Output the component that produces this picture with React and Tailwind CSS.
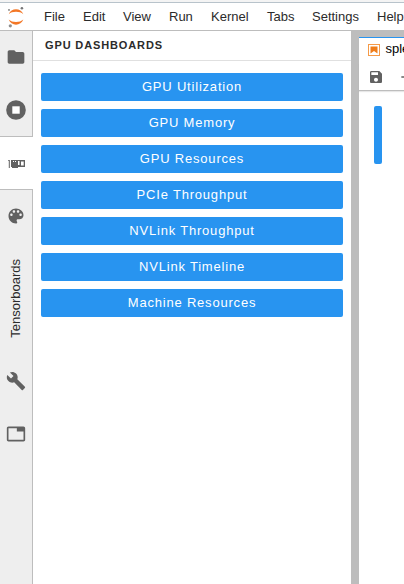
import React from "react";

const menus = [
  ["File", "w-[39px]"],
  ["Edit", "w-[40px]"],
  ["View", "w-[46px]"],
  ["Run", "w-[42px]"],
  ["Kernel", "w-[56px]"],
  ["Tabs", "w-[45px]"],
  ["Settings", "w-[65px]"],
  ["Help", "w-[45px]"],
];

const dashboards = [
  "GPU Utilization",
  "GPU Memory",
  "GPU Resources",
  "PCIe Throughput",
  "NVLink Throughput",
  "NVLink Timeline",
  "Machine Resources",
];

function JupyterLogo() {
  return (
    <svg className="ml-[7px] mt-[3px] h-[22px] w-[18px] shrink-0" viewBox="0 0 18 22">
      <path d="M1.700 8.200C3 5 5.800 3.200 9 3.200s6 1.800 7.300 5C14.500 6.500 12 5.800 9 5.800s-5.500.7-7.300 2.400Z" fill="#f37726" />
      <path d="M1.700 13.500C3 16.900 5.800 18.700 9 18.700s6-1.800 7.300-5.200C14.500 15.200 12 16 9 16s-5.500-.8-7.300-2.500Z" fill="#f37726" />
      <circle cx="14.900" cy="2.200" r="1.300" fill="#767677" />
      <circle cx="2" cy="3.900" r="0.900" fill="#767677" />
      <circle cx="3.300" cy="19.800" r="1.600" fill="#8e8e8e" />
    </svg>
  );
}

function Icon({ children, className = "h-5 w-5" }) {
  return (
    <svg className={className} viewBox="0 0 24 24" fill="#616161">
      {children}
    </svg>
  );
}

function GpuIcon() {
  return (
    <svg className="mt-0.5 h-[10px] w-[18px]" viewBox="0 0 18 10" fill="#616161">
      <path d="M1 1h1.800v8H1.800V1.800H1z" />
      <path fillRule="evenodd" d="M4 1h14v7h-7v1H5V8H4ZM6 2v1h1V2ZM8 2v1h1V2ZM11 2v4h1.500V2ZM14 2.500v4h2.700v-4Z" />
    </svg>
  );
}

function SideTab({ children, active, raised }) {
  return (
    <div
      className={
        active
          ? "flex h-[54px] w-[33px] -mt-px shrink-0 items-center justify-center border-y border-[#bdbdbd] bg-white pr-px"
          : `flex h-[53px] w-8 shrink-0 items-center justify-center ${raised ? "pb-0.5" : ""}`
      }
    >
      {children}
    </div>
  );
}

export default function App() {
  return (
    <div className="flex h-[584px] w-[404px] flex-col overflow-hidden bg-white font-['Liberation_Sans',Arial,sans-serif] text-[13px] text-[#2b2b2b]">
      <div className="h-[3px] shrink-0 border-b border-[#b8c3cb] bg-[#f4f4f4]" />
      <header className="flex h-7 shrink-0 border-b border-[#bdbdbd]">
        <JupyterLogo />
        <nav className="ml-[19px] flex leading-[27px]">
          {menus.map(([name, width]) => (
            <span key={name} className={`${width} shrink-0`}>{name}</span>
          ))}
        </nav>
      </header>
      <main className="flex min-h-0 flex-1">
        <aside className="flex w-[33px] shrink-0 flex-col border-r border-[#bdbdbd] bg-[#eeeeee]">
          <SideTab raised>
            <Icon>
              <path d="M10 4H4c-1.100 0-1.990.9-1.990 2L2 18c0 1.100.9 2 2 2h16c1.100 0 2-.9 2-2V8c0-1.100-.9-2-2-2h-8l-2-2z" />
            </Icon>
          </SideTab>
          <SideTab raised>
            <svg className="h-5 w-5" viewBox="0 0 20 20">
              <circle cx="10" cy="10" r="9.800" fill="#616161" />
              <rect x="6.300" y="6.300" width="7.400" height="7.400" fill="#fff" />
            </svg>
          </SideTab>
          <SideTab active><GpuIcon /></SideTab>
          <SideTab raised>
            <Icon>
              <path d="M12 3c-4.970 0-9 4.030-9 9s4.030 9 9 9c.83 0 1.500-.67 1.500-1.500 0-.39-.15-.74-.39-1.010-.23-.26-.38-.61-.38-.99 0-.83.67-1.500 1.500-1.500H16c2.760 0 5-2.240 5-5 0-4.420-4.030-8-9-8zm-5.500 9c-.83 0-1.500-.67-1.500-1.500S5.670 9 6.500 9 8 9.670 8 10.500 7.330 12 6.500 12zm3-4C8.670 8 8 7.330 8 6.500S8.670 5 9.500 5s1.500.67 1.500 1.500S10.330 8 9.500 8zm5 0c-.83 0-1.500-.67-1.500-1.500S13.670 5 14.500 5s1.500.67 1.500 1.500S15.330 8 14.500 8zm3 4c-.83 0-1.500-.67-1.500-1.500S16.670 9 17.500 9s1.500.67 1.500 1.500-.67 1.500-1.500 1.500z" />
            </Icon>
          </SideTab>
          <div className="flex h-[111px] w-8 shrink-0 items-center justify-center">
            <span className="rotate-180 leading-4 [writing-mode:vertical-rl]">Tensorboards</span>
          </div>
          <SideTab>
            <Icon>
              <path d="M22.700 19l-9.100-9.100c.9-2.300.4-5-1.500-6.900-2-2-5-2.400-7.400-1.300L9 6 6 9 1.600 4.700C.4 7.100.9 10.100 2.900 12.100c1.900 1.900 4.600 2.400 6.900 1.500l9.100 9.100c.4.4 1 .4 1.400 0l2.300-2.300c.5-.4.5-1.100.1-1.400z" />
            </Icon>
          </SideTab>
          <SideTab>
            <Icon>
              <path d="M21 3H3c-1.100 0-2 .9-2 2v14c0 1.100.9 2 2 2h18c1.100 0 2-.9 2-2V5c0-1.100-.9-2-2-2zm0 16H3V5h10v4h8v10z" />
            </Icon>
          </SideTab>
        </aside>
        <section className="w-[318px] shrink-0 bg-white">
          <h2 className="h-[30px] border-b border-[#e0e0e0] pl-3 text-[11px] font-bold leading-[29px] tracking-[0.87px]">
            GPU DASHBOARDS
          </h2>
          <div className="flex flex-col gap-2 px-2 pt-3">
            {dashboards.map((name) => (
              <button key={name} className="h-7 rounded-[2px] bg-[#2894f0] text-[13px] leading-7 tracking-[0.8px] text-white">
                {name}
              </button>
            ))}
          </div>
        </section>
        <div className="w-2 shrink-0 bg-[#bdbdbd]" />
        <section className="flex min-w-0 flex-1 flex-col bg-white">
          <div className="h-1.5 shrink-0 bg-[#bdbdbd]" />
          <div className="flex h-[26px] shrink-0 items-center border-t border-[#2894f0] pb-0.5 pl-[9px]">
            <svg className="h-3 w-3 shrink-0" viewBox="0 0 12 12">
              <rect x="0.500" y="0.500" width="11" height="11" fill="#fff" stroke="#f59a48" />
              <path d="M2.500 2.500h7v7L6 7 2.500 9.500Z" fill="#ef7d1a" />
            </svg>
            <span className="ml-[5.500px] -mt-0.5 leading-4 text-black">sple</span>
          </div>
          <div className="flex h-7 shrink-0 items-center border-b border-[#bdbdbd] pl-[9px] shadow-[0_1px_1px_#00000018]">
            <Icon className="h-4 w-4 shrink-0">
              <path d="M17 3H5c-1.110 0-2 .9-2 2v14c0 1.100.89 2 2 2h14c1.100 0 2-.9 2-2V7l-4-4zm-5 16c-1.660 0-3-1.340-3-3s1.340-3 3-3 3 1.340 3 3-1.340 3-3 3zm3-10H5V5h10v4z" />
            </Icon>
            <Icon className="ml-[13.500px] h-4 w-4 shrink-0">
              <path d="M19 13h-6v6h-2v-6H5v-2h6V5h2v6h6v2z" />
            </Icon>
          </div>
          <div className="ml-[15px] mt-[15px] h-[58px] w-2 shrink-0 rounded-[2px] bg-[#2894f0]" />
        </section>
      </main>
    </div>
  );
}
